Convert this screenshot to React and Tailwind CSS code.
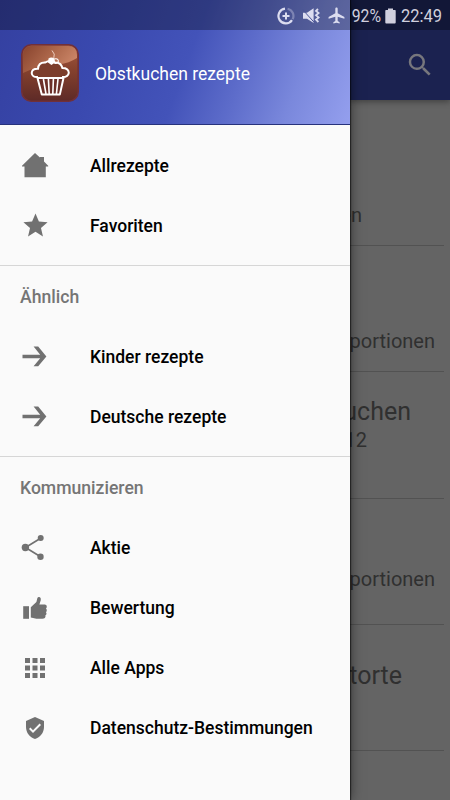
import {
    MdAirplanemodeActive,
    MdApps,
    MdSearch,
    MdStar,
    MdVerifiedUser,
} from 'react-icons/md';

function HomeIcon() {
    return (
        <svg width="28" height="28" viewBox="0 0 28 28" fill="currentColor">
            <path d="M14 1 L18.9 5.6 V5 H23 V9.4 L27.2 13.8 V14.4 H24.8 V25.2 H3.5 V14.4 H1 V13.8 Z" />
        </svg>
    );
}

function ArrowIcon() {
    return (
        <svg width="28" height="28" viewBox="0 0 28 28" fill="currentColor">
            <path d="M1.5 11.8 H19.2 L12.6 3.6 H17.2 L25.4 13.4 L17.2 23.2 H12.6 L19.2 15.2 H1.5 Z" />
        </svg>
    );
}

function ShareIcon() {
    return (
        <svg width="28" height="28" viewBox="0 0 28 28" fill="currentColor">
            <path d="M20 4 L4.5 13.5 L20 23" fill="none" stroke="currentColor" strokeWidth="1.7" />
            <circle cx="4.4" cy="13.5" r="3.7" />
            <circle cx="19.7" cy="4" r="3" />
            <circle cx="19.5" cy="22.8" r="3.2" />
        </svg>
    );
}

function ThumbIcon() {
    return (
        <svg width="28" height="28" viewBox="0 0 28 28" fill="currentColor">
            <path d="M2.2 12.2 H8 V24.8 H2.2 Z" />
            <path d="M9.8 13.2 L15.4 8 L16.4 4 Q17 2.6 18.4 3 Q20.2 3.6 19.8 6 L18.4 10.6 H24 Q26 10.8 25.8 12.8 Q25.7 14 25 14.4 Q26.2 15.4 25.7 17 Q25.5 17.8 24.9 18.1 Q25.9 19.2 25.3 20.6 Q25 21.3 24.3 21.6 Q25 23 23.8 24.1 Q23 24.8 21.4 24.8 H15.4 L9.8 23.4 Z" />
        </svg>
    );
}

function CupcakeLogo() {
    return (
        <svg width="58" height="58" viewBox="0 0 58 58">
            <defs>
                <linearGradient id="logoBase" x1="0" y1="0" x2="0" y2="1">
                    <stop offset="0" stopColor="#a4593f" />
                    <stop offset="0.45" stopColor="#85412d" />
                    <stop offset="1" stopColor="#5d2a27" />
                </linearGradient>
                <linearGradient id="logoShine" x1="0" y1="0.3" x2="1" y2="0.7">
                    <stop offset="0" stopColor="#8f4a33" />
                    <stop offset="0.5" stopColor="#b06a4d" />
                    <stop offset="1" stopColor="#d08b6d" />
                </linearGradient>
            </defs>
            <rect x="0.8" y="0.8" width="56.4" height="56.4" rx="9.5" fill="url(#logoBase)" stroke="#70303a" strokeWidth="1.6" />
            <path d="M2 29 V11 Q2 2 11 2 H47 Q56 2 56 11 V14 Q48 19 38 20.5 Q16 22 2 29 Z" fill="url(#logoShine)" />
            <path d="M17 33 Q11 33.5 10.7 29 Q11 24.6 17 24.8 Q17.5 18.4 24 18.6 Q29 15.6 34 18.4 Q40 18.2 41.4 24 Q47.5 24 47.8 28.8 Q47 33.4 41 33" fill="#7c3e2c" stroke="#fff" strokeWidth="2" />
            <path d="M16.5 34 H42.5 L38.8 50.6 H20.8 Z" fill="#6b3029" stroke="#fff" strokeWidth="2" strokeLinejoin="round" />
            <path d="M22.4 35 L25 50 M27.4 35 L28.2 50 M32.4 35 L31.8 50 M37 35 L35.4 50" stroke="#fff" strokeWidth="1.6" />
            <path d="M27.5 14.4 Q30.5 12.6 33.4 14.6 L34.2 18.6 L30.4 21 L27 18.6 Z" fill="#fff" />
            <path d="M33.2 15 Q37 14 37.4 17 Q37 19.8 33.4 19.4" fill="none" stroke="#fff" strokeWidth="1.1" />
            <path d="M31 6.5 Q34.6 10 32.8 14" fill="none" stroke="#f3d9cc" strokeWidth="0.9" />
        </svg>
    );
}

function DataSaverIcon() {
    return (
        <svg width="18" height="18" viewBox="0 0 18 18" fill="none" stroke="currentColor">
            <path d="M10.6 1.7 A7.4 7.4 0 0 1 15.6 12.3" strokeWidth="2.2" opacity="0.35" />
            <path d="M8 1.7 A7.4 7.4 0 1 0 15 13.2" strokeWidth="2.2" />
            <path d="M9 5.4 V12.4 M5.5 8.9 H12.5" strokeWidth="2" />
        </svg>
    );
}

function MuteVibrateIcon() {
    return (
        <svg width="18" height="18" viewBox="0 0 18 18" fill="currentColor">
            <path d="M1 5.8 H5 L11.6 1.2 V16 L5 11.8 H1 Z" />
            <path d="M0.8 2.8 L12.4 15.6" stroke="#4b5597" strokeWidth="1" />
            <path d="M16 2 L14 4 L16.6 6 L14 8.2 L16.6 10.4 L14 12.6 L16.4 15" fill="none" stroke="currentColor" strokeWidth="1.8" />
        </svg>
    );
}

function BatteryIcon() {
    return (
        <svg width="11" height="16" viewBox="0 0 11 16" fill="currentColor" className="shrink-0">
            <path d="M3 0.5 H8 V2 H10 Q10.7 2 10.7 2.8 V14.6 Q10.7 15.5 9.8 15.5 H1.2 Q0.3 15.5 0.3 14.6 V2.8 Q0.3 2 1 2 H3 Z" />
        </svg>
    );
}

const MENU = [
    {
        items: [
            { label: 'Allrezepte', icon: <HomeIcon /> },
            { label: 'Favoriten', icon: <MdStar size={29} className="-mt-px" /> },
        ],
    },
    {
        title: 'Ähnlich',
        items: [
            { label: 'Kinder rezepte', icon: <ArrowIcon /> },
            { label: 'Deutsche rezepte', icon: <ArrowIcon /> },
        ],
    },
    {
        title: 'Kommunizieren',
        items: [
            { label: 'Aktie', icon: <ShareIcon /> },
            { label: 'Bewertung', icon: <ThumbIcon /> },
            { label: 'Alle Apps', icon: <MdApps size={30} /> },
            { label: 'Datenschutz-Bestimmungen', icon: <MdVerifiedUser size={24} /> },
        ],
    },
];

// only the tail of each recipe is visible next to the open drawer
const RECIPES = [
    { info: 'en', pad: 'pt-[83px]', end: 'pr-[82px]' },
    { info: 'portionen', pad: 'pt-[83px]', end: 'pr-[9px]' },
    { title: 'uchen', info: '12', pad: 'pt-[22px]', end: 'pr-[77px]', titleEnd: 'pr-[33px]' },
    { info: 'portionen', pad: 'pt-[68px]', end: 'pr-[9px]' },
    { title: 'torte', pad: 'pt-[34px]', titleEnd: 'pr-[42px]' },
];

function StatusBar() {
    return (
        <div className="absolute inset-x-0 top-0 z-20 flex h-[30px] bg-black/30 text-[#dcddf0]">
            <div className="flex w-[350px] items-center justify-end gap-[7px] pt-px pr-[4px]">
                <DataSaverIcon />
                <MuteVibrateIcon />
                <MdAirplanemodeActive size={19} />
            </div>
            <div className="flex flex-1 items-center pt-[2px] text-[19px] text-[#d0cfdd]">
                <span className="w-[35px] origin-left scale-x-[0.83] pl-[2px]">92%</span>
                <BatteryIcon />
                <span className="ml-[5px] origin-left scale-x-[0.87]">22:49</span>
            </div>
        </div>
    );
}

function Drawer() {
    return (
        <aside className="relative z-10 h-full w-[350px] shrink-0 bg-[#fafafa] shadow-[0_0_12px_rgba(0,0,0,0.55),1px_0_1px_rgba(0,0,0,0.5)]">
            <div className="h-[125px] border-b border-[#27327c] bg-[linear-gradient(110deg,#3440a0_0%,#3a49af_30%,#4353b9_53%,#5d6cca_68%,#7a88dc_83%,#949fee_100%)] pt-[30px]">
                <div className="flex h-[86px] items-center pl-[21px]">
                    <CupcakeLogo />
                    <span className="mt-[3px] ml-4 text-[17.5px] text-white">Obstkuchen rezepte</span>
                </div>
            </div>
            <nav className="pt-[11px]">
                {MENU.map((group, i) => (
                    <section key={i} className={i > 0 ? 'mt-[9px] border-t border-[#d6d6d6]' : ''}>
                        {group.title && (
                            <h2 className="flex h-[61px] items-center pt-[2px] pl-5 text-[17.6px] font-medium text-[#757575]">{group.title}</h2>
                        )}
                        {group.items.map((item) => (
                            <div key={item.label} className="flex h-[60px] items-center pl-5">
                                <span className="flex w-[30px] justify-center text-[#717171]">{item.icon}</span>
                                <span className="ml-10 text-[17.5px] font-medium text-black">{item.label}</span>
                            </div>
                        ))}
                    </section>
                ))}
            </nav>
        </aside>
    );
}

function RecipeList() {
    return (
        <main className="flex min-w-0 flex-1 flex-col overflow-hidden bg-[#646464] text-[#303030]">
            <div className="z-[1] flex h-[100px] shrink-0 items-center justify-end bg-[#1b2250] pt-[30px] pr-[15px] text-[#77777d] shadow-[0_2px_6px_rgba(0,0,0,0.35)]">
                <MdSearch size={30} />
            </div>
            <div className="pt-5 pr-[6px]">
                {RECIPES.map((recipe, i) => (
                    <div key={i} className={`h-[126.2px] border-b border-[#525252] whitespace-nowrap ${recipe.pad}`}>
                        {recipe.title && (
                            <div className={`flex h-[34px] items-center justify-end text-[25px] ${recipe.titleEnd}`}>{recipe.title}</div>
                        )}
                        {recipe.info && (
                            <div className={`flex h-[24px] items-center justify-end text-[20px] ${recipe.end}`}>{recipe.info}</div>
                        )}
                    </div>
                ))}
            </div>
        </main>
    );
}

export default function App() {
    return (
        <div className="relative flex h-[800px] w-[450px] overflow-hidden font-['Roboto',sans-serif]">
            <StatusBar />
            <Drawer />
            <RecipeList />
        </div>
    );
}
